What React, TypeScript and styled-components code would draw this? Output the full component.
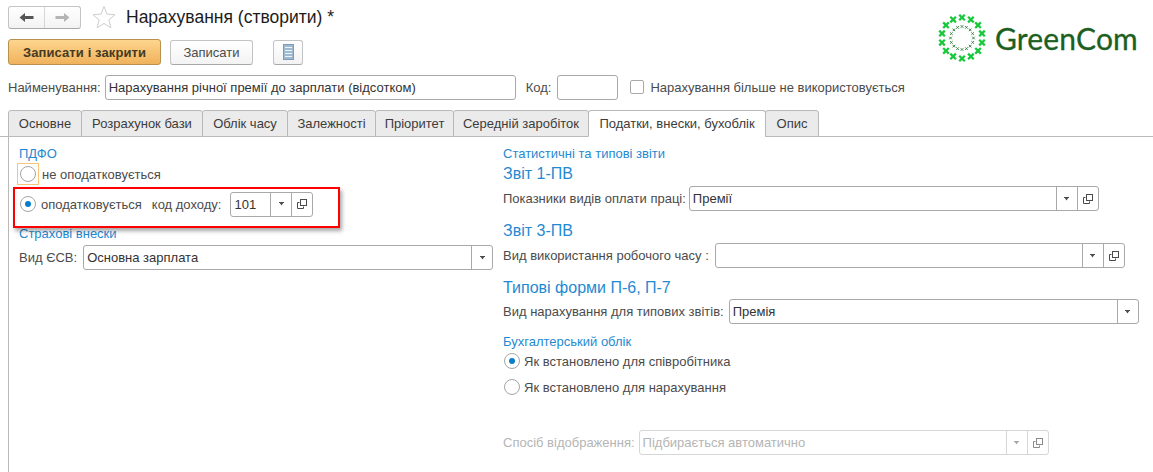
import React from 'react';
import styled, { createGlobalStyle } from 'styled-components';

const GlobalStyle = createGlobalStyle`
  html, body {
    margin: 0;
    padding: 0;
    background: #fff;
  }
  body {
    font-family: 'Liberation Sans', Arial, sans-serif;
    font-size: 13px;
    color: #4b4b4b;
  }
`;

const Page = styled.div`
  position: relative;
  width: 1153px;
  height: 472px;
  overflow: hidden;
  background: #fff;
`;

const Header = styled.div`
  display: flex;
  justify-content: space-between;
  padding: 5px 15px 0 8px;
  height: 75px;
  box-sizing: border-box;
`;

const HeaderLeft = styled.div`
  display: flex;
  flex-direction: column;
  gap: 10px;
`;

const TitleRow = styled.div`
  display: flex;
  align-items: center;
  height: 24px;
`;

const NavGroup = styled.div`
  display: flex;
  width: 73px;
  height: 23px;
  box-sizing: border-box;
  border: 1px solid #c4c4c4;
  border-bottom-color: #a8a8a8;
  border-radius: 3px;
  background: linear-gradient(#ffffff, #f3f3f3);
`;

const NavButton = styled.div<{ $divider?: boolean }>`
  flex: 1;
  display: flex;
  align-items: center;
  justify-content: center;
  border-right: ${(p) => (p.$divider ? '1px solid #d6d6d6' : 'none')};
`;

const StarBox = styled.div`
  display: flex;
  margin-left: 11px;
  width: 25px;
`;

const Title = styled.h1`
  margin: 0 0 0 9px;
  font-size: 17.5px;
  font-weight: normal;
  color: #1c1c1c;
  white-space: nowrap;
`;

const ActionRow = styled.div`
  display: flex;
  align-items: center;
  height: 26px;
`;

const PrimaryButton = styled.div`
  display: flex;
  align-items: center;
  justify-content: center;
  width: 153px;
  height: 26px;
  box-sizing: border-box;
  border: 1px solid #b8914c;
  border-radius: 3px;
  background: linear-gradient(#fdd58e, #f0b25c);
  font-weight: bold;
  font-size: 13px;
  letter-spacing: 0.1px;
  color: #463a22;
`;

const PlainButton = styled.div<{ $w: number; $ml: number }>`
  display: flex;
  align-items: center;
  justify-content: center;
  width: ${(p) => p.$w}px;
  height: 25px;
  margin-left: ${(p) => p.$ml}px;
  box-sizing: border-box;
  border: 1px solid #c4c4c4;
  border-bottom-color: #a8a8a8;
  border-radius: 3px;
  background: linear-gradient(#ffffff, #f3f3f3);
  color: #4b4b4b;
`;

const Logo = styled.div`
  display: flex;
  align-items: center;
  gap: 8px;
  height: 50px;
  margin-top: 8px;
`;

const LogoText = styled.span`
  font-family: 'Lato', sans-serif;
  font-size: 30px;
  color: #1c5f22;
  letter-spacing: 0.2px;
  -webkit-text-stroke: 0.3px #1c5f22;
`;

const NameRow = styled.div`
  display: flex;
  align-items: center;
  height: 24px;
  padding-left: 8px;
`;

const Label = styled.span<{ $ml?: number; $disabled?: boolean }>`
  margin-left: ${(p) => p.$ml ?? 0}px;
  color: ${(p) => (p.$disabled ? '#b5b5b5' : '#4b4b4b')};
  white-space: nowrap;
`;

const Combo = styled.div<{ $w: number; $left?: number; $disabled?: boolean }>`
  display: flex;
  width: ${(p) => p.$w}px;
  height: 25px;
  margin-left: ${(p) => p.$left ?? 0}px;
  box-sizing: border-box;
  border: 1px solid ${(p) => (p.$disabled ? '#d6d6d6' : '#a9a9a9')};
  border-radius: 3px;
  background: #fff;
`;

const ComboValue = styled.div<{ $disabled?: boolean }>`
  flex: 1;
  display: flex;
  align-items: center;
  padding-left: 3px;
  color: ${(p) => (p.$disabled ? '#b5b5b5' : '#333')};
  white-space: nowrap;
  overflow: hidden;
`;

const ComboButton = styled.div<{ $disabled?: boolean }>`
  display: flex;
  align-items: center;
  justify-content: center;
  width: 20px;
  border-left: 1px solid ${(p) => (p.$disabled ? '#d6d6d6' : '#a9a9a9')};
`;

const Checkbox = styled.div`
  width: 14px;
  height: 14px;
  margin-left: 12px;
  box-sizing: border-box;
  border: 1px solid #a9a9a9;
  border-radius: 2px;
  background: #fff;
`;

const TabStrip = styled.div`
  display: flex;
  align-items: flex-end;
  height: 28px;
  margin-top: 10px;
  padding-left: 8px;
  box-sizing: border-box;
  border-bottom: 1px solid #b9b9b9;
`;

const Tab = styled.div<{ $w: number; $active?: boolean }>`
  display: flex;
  align-items: center;
  justify-content: center;
  width: ${(p) => p.$w}px;
  height: 27px;
  box-sizing: border-box;
  border: 1px solid #b9b9b9;
  border-bottom: ${(p) => (p.$active ? '1px solid #fff' : '1px solid #b9b9b9')};
  margin-bottom: -1px;
  margin-right: -1px;
  border-radius: 3px 3px 0 0;
  background: ${(p) => (p.$active ? '#fff' : '#ebebeb')};
  position: relative;
  color: #3c3c3c;
  white-space: nowrap;
`;

const Panel = styled.div`
  display: grid;
  grid-template-columns: 484px 1fr;
  margin-left: 8px;
  padding: 9px 0 0 10px;
  height: 335px;
  box-sizing: border-box;
  border-left: 1px solid #b9b9b9;
`;

const Column = styled.div`
  display: flex;
  flex-direction: column;
`;

const GroupTitle = styled.div<{ $mt?: number }>`
  margin-top: ${(p) => p.$mt ?? 0}px;
  height: 15px;
  line-height: 15px;
  color: #1f8ad2;
  white-space: nowrap;
`;

const SectionTitle = styled.div<{ $mt?: number }>`
  margin-top: ${(p) => p.$mt ?? 0}px;
  height: 20px;
  line-height: 20px;
  font-size: 16px;
  color: #1f8ad2;
  white-space: nowrap;
`;

const Row = styled.div<{ $mt?: number; $h?: number }>`
  display: flex;
  align-items: center;
  height: ${(p) => p.$h ?? 25}px;
  margin-top: ${(p) => p.$mt ?? 0}px;
`;

const RadioFocus = styled.div<{ $focus?: boolean }>`
  display: flex;
  align-items: center;
  justify-content: center;
  width: 22px;
  height: 22px;
  margin-left: -2px;
  box-sizing: border-box;
  border: 1px solid ${(p) => (p.$focus ? '#f7c578' : 'transparent')};
`;

const Radio = styled.div<{ $on?: boolean }>`
  display: flex;
  align-items: center;
  justify-content: center;
  width: 16px;
  height: 16px;
  box-sizing: border-box;
  border: 1px solid #a5a5a5;
  border-radius: 50%;
  background: #fff;

  &::after {
    content: '';
    display: ${(p) => (p.$on ? 'block' : 'none')};
    width: 6px;
    height: 6px;
    border-radius: 50%;
    background: #0b7dc9;
  }
`;

const Highlight = styled.div`
  position: absolute;
  left: 13px;
  top: 187px;
  width: 327px;
  height: 41px;
  box-sizing: border-box;
  border: 2px solid #ff0000;
  box-shadow: 2px 3px 4px rgba(0, 0, 0, 0.35);
  pointer-events: none;
`;

const ArrowIcon = ({ dir, color }: { dir: 'left' | 'right'; color: string }) => (
  <svg width="15" height="11" viewBox="0 0 15 11">
    <path
      d={dir === 'left' ? 'M0.5 5.5L6 1v3h8.5v3H6v3z' : 'M14.5 5.5L9 1v3H0.5v3H9v3z'}
      fill={color}
    />
  </svg>
);

const StarIcon = () => (
  <svg width="24" height="24" viewBox="0 0 24 24">
    <path
      d="M12 1.5l3 7.6 8 .6-6.2 5.1 2 7.9L12 18.4l-6.8 4.3 2-7.9L1 9.7l8-.6z"
      fill="#fff"
      stroke="#cfcfcf"
    />
  </svg>
);

const ListIcon = () => (
  <svg width="11" height="16" viewBox="0 0 11 16">
    <rect x="0.5" y="0.5" width="10" height="15" fill="#9fb9d3" stroke="#7f9bb8" />
    <path d="M2 3.5h7M2 6.5h7M2 9.5h7M2 12.5h7" stroke="#eef3f8" />
  </svg>
);

const DropIcon = ({ color = '#4b4b4b' }: { color?: string }) => (
  <svg width="5" height="4" viewBox="0 0 5 4">
    <path d="M0 0h5v1H4.2L2.5 3.5 0.8 1H0z" fill={color} />
  </svg>
);

const OpenIcon = ({ color = '#4b4b4b' }: { color?: string }) => (
  <svg width="10" height="10" viewBox="0 0 10 10" fill="none" stroke={color}>
    <rect x="3.5" y="0.5" width="6" height="6" />
    <path d="M2.5 3.5H0.5V9.5H6.5V7.5" />
  </svg>
);

// ring of small crosses around the logo centre
const LogoMark = () => {
  const cross = (r: number, deg: number, s: number, w: number, color: string, key: string) => {
    const a = (deg * Math.PI) / 180;
    const x = 25 + r * Math.cos(a);
    const y = 25 + r * Math.sin(a);
    return (
      <path
        key={key}
        d={`M${x - s} ${y - s}L${x + s} ${y + s}M${x + s} ${y - s}L${x - s} ${y + s}`}
        stroke={color}
        strokeWidth={w}
      />
    );
  };
  const outer = Array.from({ length: 14 }, (_, i) =>
    cross(20.5, i * (360 / 14) + 90, 2.8, 2.3, '#17c93a', `o${i}`),
  );
  const inner = Array.from({ length: 16 }, (_, i) =>
    cross(11.5, i * 22.5, 1.3, 1, '#3d8a4a', `i${i}`),
  );
  return (
    <svg width="50" height="50" viewBox="0 0 50 50">
      {outer}
      {inner}
    </svg>
  );
};

const tabs: [string, number][] = [
  ['Основне', 74],
  ['Розрахунок бази', 122],
  ['Облік часу', 86],
  ['Залежності', 89],
  ['Пріоритет', 79],
  ['Середній заробіток', 136],
  ['Податки, внески, бухоблік', 178],
  ['Опис', 54],
];

interface ComboFieldProps {
  w: number;
  left?: number;
  value?: string;
  open?: boolean;
  disabled?: boolean;
}

const ComboField: React.FC<ComboFieldProps> = ({ w, left, value, open = true, disabled }) => (
  <Combo $w={w} $left={left} $disabled={disabled}>
    <ComboValue $disabled={disabled}>{value}</ComboValue>
    <ComboButton $disabled={disabled}>
      <DropIcon color={disabled ? '#a5a5a5' : '#4b4b4b'} />
    </ComboButton>
    {open && (
      <ComboButton $disabled={disabled}>
        <OpenIcon color={disabled ? '#8a8a8a' : '#4b4b4b'} />
      </ComboButton>
    )}
  </Combo>
);

const App: React.FC = () => (
  <Page>
    <GlobalStyle />
    <Header>
      <HeaderLeft>
        <TitleRow>
          <NavGroup>
            <NavButton $divider>
              <ArrowIcon dir="left" color="#555" />
            </NavButton>
            <NavButton>
              <ArrowIcon dir="right" color="#b4b4b4" />
            </NavButton>
          </NavGroup>
          <StarBox>
            <StarIcon />
          </StarBox>
          <Title>Нарахування (створити) *</Title>
        </TitleRow>
        <ActionRow>
          <PrimaryButton>Записати і закрити</PrimaryButton>
          <PlainButton $w={83} $ml={9}>
            Записати
          </PlainButton>
          <PlainButton $w={30} $ml={20}>
            <ListIcon />
          </PlainButton>
        </ActionRow>
      </HeaderLeft>
      <Logo>
        <LogoMark />
        <LogoText>GreenCom</LogoText>
      </Logo>
    </Header>
    <NameRow>
      <Label>Найменування:</Label>
      <Combo $w={411} $left={4}>
        <ComboValue>Нарахування річної премії до зарплати (відсотком)</ComboValue>
      </Combo>
      <Label $ml={10}>Код:</Label>
      <Combo $w={61} $left={6} />
      <Checkbox />
      <Label $ml={6}>Нарахування більше не використовується</Label>
    </NameRow>
    <TabStrip>
      {tabs.map(([name, w], i) => (
        <Tab key={name} $w={w} $active={i === 6}>
          {name}
        </Tab>
      ))}
    </TabStrip>
    <Panel>
      <Column>
        <GroupTitle>ПДФО</GroupTitle>
        <Row $h={22} $mt={2}>
          <RadioFocus $focus>
            <Radio />
          </RadioFocus>
          <Label $ml={3}>не оподатковується</Label>
        </Row>
        <Row $h={24} $mt={7}>
          <RadioFocus>
            <Radio $on />
          </RadioFocus>
          <Label $ml={2}>оподатковується</Label>
          <Label $ml={10}>код доходу:</Label>
          <Combo $w={83} $left={9}>
            <ComboValue>101</ComboValue>
            <ComboButton>
              <DropIcon />
            </ComboButton>
            <ComboButton>
              <OpenIcon />
            </ComboButton>
          </Combo>
        </Row>
        <GroupTitle $mt={10}>Страхові внески</GroupTitle>
        <Row $mt={4}>
          <Label>Вид ЄСВ:</Label>
          <Combo $w={410} $left={6}>
            <ComboValue>Основна зарплата</ComboValue>
            <ComboButton>
              <DropIcon />
            </ComboButton>
          </Combo>
        </Row>
      </Column>
      <Column>
        <GroupTitle>Статистичні та типові звіти</GroupTitle>
        <SectionTitle $mt={3}>Звіт 1-ПВ</SectionTitle>
        <Row $mt={2}>
          <Label>Показники видів оплати праці:</Label>
          <ComboField w={410} left={3} value="Премії" />
        </Row>
        <SectionTitle $mt={10}>Звіт 3-ПВ</SectionTitle>
        <Row $mt={2}>
          <Label>Вид використання робочого часу :</Label>
          <ComboField w={410} left={6} />
        </Row>
        <SectionTitle $mt={10}>Типові форми П-6, П-7</SectionTitle>
        <Row $mt={1}>
          <Label>Вид нарахування для типових звітів:</Label>
          <ComboField w={410} left={5} value="Премія" open={false} />
        </Row>
        <GroupTitle $mt={10}>Бухгалтерський облік</GroupTitle>
        <Row $h={22} $mt={1}>
          <RadioFocus>
            <Radio $on />
          </RadioFocus>
          <Label $ml={1}>Як встановлено для співробітника</Label>
        </Row>
        <Row $h={22} $mt={4}>
          <RadioFocus>
            <Radio />
          </RadioFocus>
          <Label $ml={1}>Як встановлено для нарахування</Label>
        </Row>
        <Row $mt={32}>
          <Label $disabled>Спосіб відображення:</Label>
          <ComboField w={410} left={4} value="Підбирається автоматично" disabled />
        </Row>
      </Column>
    </Panel>
    <Highlight />
  </Page>
);

export default App;
